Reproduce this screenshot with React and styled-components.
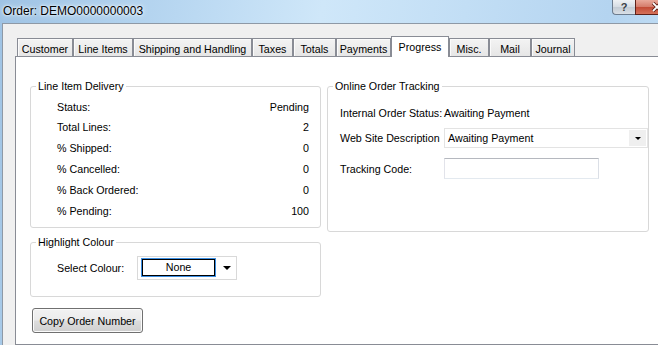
import { Fragment } from 'react'
import styled, { createGlobalStyle } from 'styled-components'

const GlobalStyle = createGlobalStyle`
  html, body {
    margin: 0;
    padding: 0;
  }
  body {
    font-family: "Liberation Sans", Arial, sans-serif;
    font-size: 10.7px;
    color: #000;
  }
`

const tabs = [
  { label: 'Customer', w: 56 },
  { label: 'Line Items', w: 60 },
  { label: 'Shipping and Handling', w: 119 },
  { label: 'Taxes', w: 41 },
  { label: 'Totals', w: 43 },
  { label: 'Payments', w: 55 },
  { label: 'Progress', w: 58, active: true },
  { label: 'Misc.', w: 40 },
  { label: 'Mail', w: 42 },
  { label: 'Journal', w: 44 },
]

const delivery = [
  ['Status:', 'Pending'],
  ['Total Lines:', '2'],
  ['% Shipped:', '0'],
  ['% Cancelled:', '0'],
  ['% Back Ordered:', '0'],
  ['% Pending:', '100'],
]

const App = () => {
  return (
    <Window>
      <GlobalStyle />
      <TitleBar>
        <Title>Order: DEMO0000000003</Title>
        <Caption>
          <HelpButton>?</HelpButton>
          <CloseButton>
            <svg width="12" height="10" viewBox="0 0 12 10">
              <path d="M2 1 L10 9 M10 1 L2 9" stroke="#5a1a12" strokeWidth="3.4" />
              <path d="M2 1 L10 9 M10 1 L2 9" stroke="#fff" strokeWidth="1.8" />
            </svg>
          </CloseButton>
        </Caption>
      </TitleBar>

      <Client>
        <TabStrip>
          {tabs.map((t) => (
            <Tab key={t.label} $w={t.w} $active={t.active}>{t.label}</Tab>
          ))}
        </TabStrip>

        <Panel>
          <LeftColumn>
            <GroupBox>
              <Legend>Line Item Delivery</Legend>
              <DeliveryGrid>
                {delivery.map(([k, v]) => (
                  <Fragment key={k}>
                    <span>{k}</span>
                    <Value>{v}</Value>
                  </Fragment>
                ))}
              </DeliveryGrid>
            </GroupBox>

            <HighlightBox>
              <Legend>Highlight Colour</Legend>
              <ColourRow>
                <span>Select Colour:</span>
                <ColourCombo>
                  <Swatch>None</Swatch>
                  <ArrowCell><Arrow $size={4} /></ArrowCell>
                </ColourCombo>
              </ColourRow>
            </HighlightBox>

            <Button>Copy Order Number</Button>
          </LeftColumn>

          <TrackingBox>
            <Legend>Online Order Tracking</Legend>
            <FieldRow $h={20}>
              <span>Internal Order Status:</span>
              <span>Awaiting Payment</span>
            </FieldRow>
            <FieldRow $h={20} $mt={5}>
              <span>Web Site Description</span>
              <Combo>
                <ComboText>Awaiting Payment</ComboText>
                <ComboButton><Arrow $size={3} /></ComboButton>
              </Combo>
            </FieldRow>
            <FieldRow $h={21} $mt={10}>
              <span>Tracking Code:</span>
              <TextInput />
            </FieldRow>
          </TrackingBox>
        </Panel>
      </Client>
    </Window>
  )
}

export default App

const Window = styled.div`
  width: 658px;
  height: 345px;
  overflow: hidden;
  display: flex;
  flex-direction: column;
  background: linear-gradient(100deg, #9fc3e4 0%, #b8d7f1 25%, #cfe7f9 45%, #c2def5 65%, #b4d4f0 85%, #c6e0f5 100%);
`

const TitleBar = styled.div`
  height: 23px;
  flex-shrink: 0;
  display: flex;
  align-items: flex-start;
`

const Title = styled.div`
  padding-left: 3px;
  line-height: 22px;
  font-size: 12px;
  color: #000;
  white-space: nowrap;
  text-shadow: 0 0 6px #eaf4fc, 0 0 3px #eaf4fc, 0 0 2px #eaf4fc;
`

const Caption = styled.div`
  margin-left: auto;
  margin-right: -20px;
  display: flex;
`

const HelpButton = styled.div`
  width: 23px;
  height: 15px;
  box-sizing: border-box;
  border: 1px solid #6d7c8e;
  border-top: none;
  border-right: none;
  border-radius: 0 0 0 4px;
  background: linear-gradient(#eef1f4, #d6dce3 50%, #c3cbd4 51%, #d9dfe6);
  display: flex;
  align-items: center;
  justify-content: center;
  font-size: 11px;
  font-weight: bold;
  color: #3a3f46;
  line-height: 13px;
`

const CloseButton = styled.div`
  width: 43px;
  height: 15px;
  flex-shrink: 0;
  box-sizing: border-box;
  border: 1px solid #5d2019;
  border-top: none;
  background: linear-gradient(#e9a99b, #d47a69 50%, #c24a35 51%, #d5715a);
  display: flex;
  align-items: center;
  justify-content: center;
`

const Client = styled.div`
  flex: 1;
  margin-left: 2px;
  border-left: 1px solid #8e99a6;
  border-top: 1px solid #8e99a6;
  background: #f0f0f0;
  padding: 12px 0 0 12px;
  display: flex;
  flex-direction: column;
`

const TabStrip = styled.div`
  display: flex;
  align-items: flex-end;
  height: 20px;
  padding-left: 2px;
  position: relative;
  z-index: 1;
`

const Tab = styled.div`
  width: ${(p) => p.$w}px;
  height: ${(p) => (p.$active ? 21 : 18)}px;
  margin-bottom: ${(p) => (p.$active ? -1 : 0)}px;
  box-sizing: border-box;
  border: 1px solid #898c95;
  border-bottom: none;
  background: ${(p) => (p.$active ? '#fff' : 'linear-gradient(#f3f3f3, #e6e6e6)')};
  box-shadow: ${(p) => (p.$active ? 'none' : 'inset 1px 1px 0 #fbfbfb')};
  display: flex;
  align-items: center;
  justify-content: center;
  padding-top: ${(p) => (p.$active ? 0 : 2)}px;
  white-space: nowrap;
`

const Panel = styled.div`
  flex: 1;
  margin-right: -10px;
  border: 1px solid #898c95;
  background: #fff;
  display: flex;
  align-items: flex-start;
  gap: 6px;
  padding: 23px 0 0 14px;
`

const LeftColumn = styled.div`
  width: 291px;
  display: flex;
  flex-direction: column;
  align-items: flex-start;
`

const GroupBox = styled.fieldset`
  margin: 0;
  padding: 0;
  min-width: 0;
  width: 291px;
  box-sizing: border-box;
  border: 1px solid #d8d8d8;
  border-radius: 3px;
`

const HighlightBox = styled(GroupBox)`
  margin-top: 8px;
`

const TrackingBox = styled(GroupBox)`
  width: 322px;
  padding: 10px 0 52px 0;
`

const Legend = styled.legend`
  margin-left: 5px;
  padding: 0 2px;
  line-height: 13px;
  white-space: nowrap;
`

const DeliveryGrid = styled.div`
  display: grid;
  grid-template-columns: 1fr auto;
  grid-template-rows: 19px repeat(5, 21px);
  align-items: center;
  padding: 4px 11px 6px 26px;
`

const Value = styled.span`
  text-align: right;
`

const ColourRow = styled.div`
  display: grid;
  grid-template-columns: 80px 100px;
  align-items: center;
  padding: 7px 0 16px 26px;
`

const ColourCombo = styled.div`
  width: 100px;
  height: 24px;
  box-sizing: border-box;
  border: 1px solid #d9d9d9;
  display: flex;
  align-items: flex-start;
`

const Swatch = styled.div`
  margin: 2px 0 0 4px;
  width: 73px;
  height: 17px;
  box-sizing: border-box;
  border: 1px solid #000;
  box-shadow: 0 0 0 1px #3c8fe3;
  text-align: center;
  line-height: 15px;
`

const ArrowCell = styled.div`
  flex: 1;
  height: 100%;
  display: flex;
  align-items: center;
  justify-content: center;
  padding-left: 3px;
`

const Arrow = styled.span`
  width: 0;
  height: 0;
  border-left: ${(p) => p.$size}px solid transparent;
  border-right: ${(p) => p.$size}px solid transparent;
  border-top: ${(p) => p.$size}px solid #000;
`

const FieldRow = styled.div`
  display: grid;
  grid-template-columns: 104px 1fr;
  align-items: center;
  height: ${(p) => p.$h}px;
  margin-top: ${(p) => p.$mt || 0}px;
  padding-left: 12px;
  white-space: nowrap;
`

const Combo = styled.div`
  height: 20px;
  box-sizing: border-box;
  border: 1px solid #e3e3e3;
  display: flex;
  align-items: stretch;
`

const ComboText = styled.div`
  flex: 1;
  padding-left: 3px;
  line-height: 18px;
`

const ComboButton = styled.div`
  width: 17px;
  margin: 1px;
  background: #efefef;
  display: flex;
  align-items: center;
  justify-content: center;
`

const TextInput = styled.div`
  width: 155px;
  height: 21px;
  box-sizing: border-box;
  border: 1px solid;
  border-color: #b5b8bf #dbdfe6 #e3e9ef #e2e3ea;
`

const Button = styled.button`
  margin: 11px 0 0 2px;
  width: 111px;
  height: 25px;
  padding: 0;
  border: 1px solid #707070;
  border-radius: 3px;
  background: linear-gradient(#f2f2f2 0%, #ebebeb 48%, #dddddd 52%, #cfcfcf 100%);
  box-shadow: inset 0 0 0 1px #fbfbfb;
  font-family: "Liberation Sans", Arial, sans-serif;
  font-size: 10.7px;
  color: #000;
`
